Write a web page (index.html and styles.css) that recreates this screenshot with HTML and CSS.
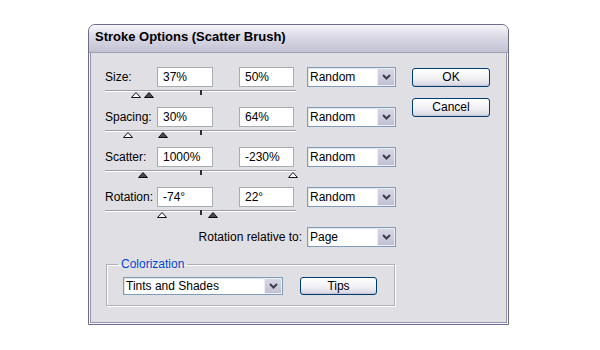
FILE: index.html
```html
<!DOCTYPE html>
<html lang="en">
<head>
  <meta charset="UTF-8" />
  <title>Stroke Options (Scatter Brush)</title>
  <link rel="stylesheet" href="styles.css">
</head>
<body>
  <div class="dialog">
    <div class="titlebar">Stroke Options (Scatter Brush)</div>
    <div class="content">
      <div class="params">

        <div class="param">
          <div class="field-row">
            <span class="label">Size:</span>
            <span class="input">37%</span>
            <span class="input second">50%</span>
            <span class="select"><span class="select-value">Random</span><span class="select-btn"><svg width="9" height="6" viewBox="0 0 9 6"><polyline points="1,1 4.5,4.5 8,1" /></svg></span></span>
          </div>
          <div class="slider">
            <span class="tick"></span>
            <svg class="thumb open" style="left:26px" viewBox="0 0 10 6"><polygon points="0.5,5.5 5,0.5 9.5,5.5" /></svg>
            <svg class="thumb solid" style="left:39px" viewBox="0 0 10 6"><polygon points="0.5,5.5 5,0.5 9.5,5.5" /></svg>
          </div>
        </div>

        <div class="param">
          <div class="field-row">
            <span class="label">Spacing:</span>
            <span class="input">30%</span>
            <span class="input second">64%</span>
            <span class="select"><span class="select-value">Random</span><span class="select-btn"><svg width="9" height="6" viewBox="0 0 9 6"><polyline points="1,1 4.5,4.5 8,1" /></svg></span></span>
          </div>
          <div class="slider">
            <span class="tick"></span>
            <svg class="thumb open" style="left:18px" viewBox="0 0 10 6"><polygon points="0.5,5.5 5,0.5 9.5,5.5" /></svg>
            <svg class="thumb solid" style="left:53px" viewBox="0 0 10 6"><polygon points="0.5,5.5 5,0.5 9.5,5.5" /></svg>
          </div>
        </div>

        <div class="param">
          <div class="field-row">
            <span class="label">Scatter:</span>
            <span class="input">1000%</span>
            <span class="input second">-230%</span>
            <span class="select"><span class="select-value">Random</span><span class="select-btn"><svg width="9" height="6" viewBox="0 0 9 6"><polyline points="1,1 4.5,4.5 8,1" /></svg></span></span>
          </div>
          <div class="slider">
            <span class="tick"></span>
            <svg class="thumb solid" style="left:33px" viewBox="0 0 10 6"><polygon points="0.5,5.5 5,0.5 9.5,5.5" /></svg>
            <svg class="thumb open" style="left:183px" viewBox="0 0 10 6"><polygon points="0.5,5.5 5,0.5 9.5,5.5" /></svg>
          </div>
        </div>

        <div class="param">
          <div class="field-row">
            <span class="label">Rotation:</span>
            <span class="input">-74°</span>
            <span class="input second">22°</span>
            <span class="select"><span class="select-value">Random</span><span class="select-btn"><svg width="9" height="6" viewBox="0 0 9 6"><polyline points="1,1 4.5,4.5 8,1" /></svg></span></span>
          </div>
          <div class="slider">
            <span class="tick"></span>
            <svg class="thumb open" style="left:52px" viewBox="0 0 10 6"><polygon points="0.5,5.5 5,0.5 9.5,5.5" /></svg>
            <svg class="thumb solid" style="left:103px" viewBox="0 0 10 6"><polygon points="0.5,5.5 5,0.5 9.5,5.5" /></svg>
          </div>
        </div>

        <div class="rel-row">
          <span>Rotation relative to:</span>
          <span class="select"><span class="select-value">Page</span><span class="select-btn"><svg width="9" height="6" viewBox="0 0 9 6"><polyline points="1,1 4.5,4.5 8,1" /></svg></span></span>
        </div>

        <fieldset class="group">
          <legend>Colorization</legend>
          <div class="group-row">
            <span class="select wide"><span class="select-value">Tints and Shades</span><span class="select-btn"><svg width="9" height="6" viewBox="0 0 9 6"><polyline points="1,1 4.5,4.5 8,1" /></svg></span></span>
            <span class="btn tips">Tips</span>
          </div>
        </fieldset>

      </div>

      <div class="buttons">
        <span class="btn">OK</span>
        <span class="btn">Cancel</span>
      </div>
    </div>
  </div>
</body>
</html>
```

FILE: styles.css
```css
body {
  margin: 0;
  background-color: #ffffff;
  color: #000000;
  font-family: "Liberation Sans", Arial, sans-serif;
  font-size: 12px;
}

.dialog {
  width: 419px;
  height: 299px;
  margin: 24px 0 0 88px;
  border: 1px solid #6d6b8c;
  border-radius: 7px 7px 0 0;
  background-color: #e0dfe3;
  box-shadow: inset 0 0 0 1px #fafafc, inset 0 0 0 2px #9594ad;
  overflow: hidden;
}

.titlebar {
  height: 27px;
  line-height: 24px;
  padding-left: 6px;
  font-size: 13px;
  font-weight: bold;
  background: linear-gradient(#f7f7fa, #dcdbe6 40%, #c3c2d4);
  border-bottom: 1px solid #a09fb6;
}

.content {
  display: flex;
  padding: 14px 0 0 16px;
}

.params {
  width: 291px;
}

.param {
  height: 40px;
}

.field-row {
  display: flex;
  align-items: center;
  height: 20px;
}

.label {
  width: 52px;
}

.input {
  box-sizing: border-box;
  width: 56px;
  height: 20px;
  line-height: 18px;
  padding-left: 5px;
  border: 1px solid #a5acb2;
  background-color: #ffffff;
}

.input.second {
  width: 55px;
  margin-left: 26px;
}

.select {
  box-sizing: border-box;
  display: flex;
  width: 89px;
  height: 20px;
  margin-left: 13px;
  border: 1px solid #7f9db9;
  background-color: #ffffff;
}

.select-value {
  flex: 1;
  line-height: 18px;
  padding-left: 2px;
  box-shadow: inset 1px 1px 0 #e3e3ea;
}

.select-btn {
  display: flex;
  align-items: center;
  justify-content: center;
  width: 16px;
  border: 1px solid #eeeef4;
  background: linear-gradient(#d8d7e4, #c2c1d4);
}

.select-btn polyline {
  fill: none;
  stroke: #3c3c50;
  stroke-width: 2;
}

.slider {
  position: relative;
  width: 191px;
  height: 17px;
  margin-top: 3px;
  background: linear-gradient(#9c9ca6 0 1px, #ffffff 1px 2px, transparent 2px);
}

.tick {
  position: absolute;
  left: 95px;
  top: 0;
  width: 2px;
  height: 5px;
  background-color: #2c2c2c;
}

.thumb {
  position: absolute;
  top: 2px;
  width: 10px;
  height: 6px;
}

.thumb polygon {
  stroke: #111111;
  stroke-width: 1;
}

.thumb.open polygon {
  fill: #ffffff;
}

.thumb.solid polygon {
  fill: #4a4a4a;
}

.rel-row {
  display: flex;
  justify-content: flex-end;
  align-items: center;
  height: 20px;
}

.rel-row .select {
  margin-left: 5px;
}

.group {
  width: 289px;
  box-sizing: border-box;
  margin: 10px 0 0 1px;
  padding: 6px 15px 10px 16px;
  border: 1px solid #b0afb8;
  box-shadow: 1px 1px 0 #ffffff, inset 1px 1px 0 #ffffff;
}

.group legend {
  margin-left: -5px;
  padding: 0 3px;
  color: #0046d5;
  line-height: 14px;
}

.group-row {
  display: flex;
  align-items: center;
}

.select.wide {
  width: 160px;
  height: 18px;
  margin-left: 0;
}

.select.wide .select-value {
  line-height: 16px;
}

.buttons {
  display: flex;
  flex-direction: column;
  gap: 11px;
  margin-left: 16px;
  padding-top: 1px;
}

.btn {
  box-sizing: border-box;
  display: block;
  width: 78px;
  height: 19px;
  line-height: 17px;
  text-align: center;
  border: 1px solid #003c74;
  border-radius: 3px;
  background: linear-gradient(#ffffff, #f1f1f5 55%, #d6d5e1);
  box-shadow: inset 0 -1px 0 #c6c5d5;
}

.btn.tips {
  width: 77px;
  height: 18px;
  line-height: 16px;
  margin-left: 17px;
}
```
